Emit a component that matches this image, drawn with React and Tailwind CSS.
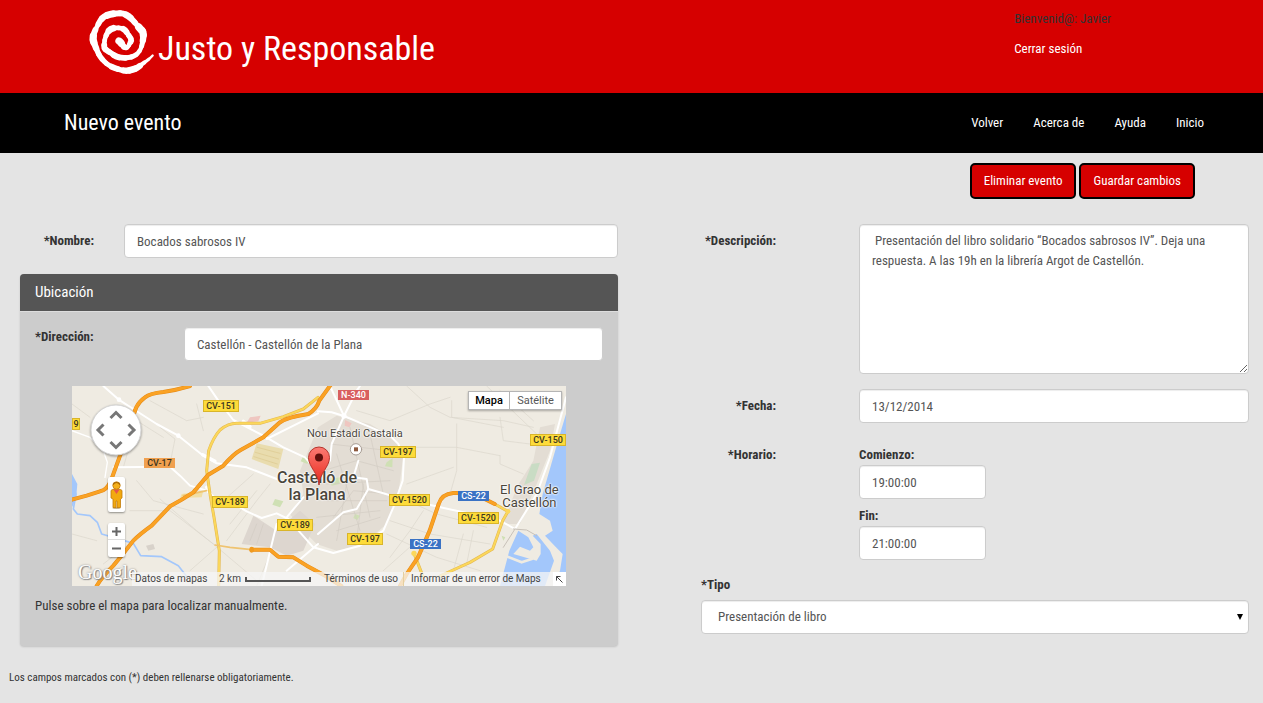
import React from "react";

const field =
  "block h-[34px] w-full rounded-[4px] border border-[#ccc] bg-white px-3 text-[13px] text-[#555] shadow-[inset_0_1px_1px_rgba(0,0,0,0.075)] outline-none";
const label = "text-[13px] leading-5 font-bold text-[#333]";
const actionButton =
  "h-9 rounded-[5px] border-2 border-black bg-[#d60000] px-3 text-[13px] text-white";

const yellow = "border border-[#d9b52a] bg-[#fddb3a] text-[#3a3520]";
const blue = "bg-[#3a72c4] text-white";

const roadLabels = [
  { text: "9", box: `left-0 top-8 h-3 w-2 ${yellow}` },
  { text: "CV-151", box: `left-[131px] top-3.5 h-3 w-9 ${yellow}` },
  { text: "CV-17", box: "left-[72px] top-[72px] h-2.5 w-[31px] bg-[#f0a04f] text-[#3a3520]" },
  { text: "CV-189", box: `left-[140px] top-[110px] h-3 w-9 ${yellow}` },
  { text: "CV-189", box: `left-[205px] top-[133px] h-3 w-9 ${yellow}` },
  { text: "N-340", box: "left-[266px] top-1 h-2.5 w-[31px] bg-[#d95f5f] text-white" },
  { text: "CV-197", box: `left-[308px] top-[60px] h-3 w-9 ${yellow}` },
  { text: "CV-1520", box: `left-[317px] top-[108px] h-3 w-[41px] ${yellow}` },
  { text: "CV-197", box: `left-[275px] top-[147px] h-3 w-9 ${yellow}` },
  { text: "CS-22", box: `left-[386px] top-[105px] h-2.5 w-[31px] ${blue}` },
  { text: "CV-1520", box: `left-[386px] top-[126px] h-3 w-[41px] ${yellow}` },
  { text: "CS-22", box: `left-[338px] top-[153px] h-2.5 w-[31px] ${blue}` },
  { text: "CV-150", box: `left-[458px] top-12 h-3 w-9 ${yellow}` },
];

// Brush stroke of the spiral: [x, y, thickness] from the tail to the centre.
const spiral = [
  [204, 144, 4], [196, 153, 7], [182, 165, 9], [168, 174, 13], [156, 185, 18], [140, 191, 20], [122, 195, 19],
  [104, 192, 16], [86, 186, 18], [68, 178, 15], [54, 166, 15], [42, 152, 16], [34, 136, 16], [27, 118, 19],
  [20, 100, 22], [24, 80, 18], [32, 64, 14], [42, 44, 17], [54, 31, 19], [72, 25, 21], [92, 22, 18],
  [112, 22, 18], [128, 30, 20], [140, 42, 18], [152, 56, 16], [164, 70, 22], [172, 78, 22], [172, 96, 19],
  [169, 112, 15], [165, 128, 13], [156, 142, 13], [144, 151, 15], [128, 155, 16], [108, 156, 17], [90, 152, 18],
  [76, 142, 16], [62, 133, 17], [54, 126, 18], [55, 110, 14], [57, 96, 14], [64, 80, 16], [74, 68, 20],
  [90, 65, 14], [106, 66, 14], [118, 72, 18], [125, 84, 15], [132, 93, 16], [137, 103, 17], [131, 112, 14],
  [127, 122, 13], [117, 127, 15], [110, 117, 18], [101, 106, 22], [97, 104, 22],
];

function midpoint(a, b) {
  return [(a[0] + b[0]) / 2, (a[1] + b[1]) / 2];
}

function Logo() {
  return (
    <svg className="h-[72px] w-[72px]" viewBox="0 0 216 216" fill="none" stroke="#fff" strokeLinecap="round" aria-hidden="true">
      {spiral.slice(1, -1).map((point, i) => {
        const from = midpoint(spiral[i], point);
        const to = midpoint(point, spiral[i + 2]);
        return (
          <path key={i} d={`M${from} Q${point[0]},${point[1]} ${to}`} strokeWidth={point[2]} />
        );
      })}
    </svg>
  );
}

function MapDrawing() {
  return (
    <svg className="block h-full w-full" viewBox="6 6 1482 600" preserveAspectRatio="xMinYMin slice" fill="none" strokeLinecap="round" strokeLinejoin="round" aria-hidden="true">
      <rect x="0" y="0" width="1500" height="612" fill="#efebe2" />
      {/* built-up areas */}
      <path fill="#e3ddd4" d="M744 130 L800 95 L900 120 L975 165 L1000 215 L985 330 L950 420 L880 480 L800 500 L740 480 L690 430 L660 390 L700 330 L690 260 Z" />
      <path fill="#ddd6cf" d="M550 395 L620 440 L690 380 L735 420 L700 500 L650 515 L600 490 L515 480 Z" />
      <path fill="#e3ddd4" d="M1410 130 L1455 120 L1440 200 L1400 300 L1350 420 L1300 420 L1340 310 L1390 230 Z" />
      <path fill="#e9dcae" d="M560 178 L640 195 L625 255 L545 225 Z" />
      <path stroke="#dcc98f" strokeWidth="2" d="M562 190 L630 208 M556 205 L626 225 M552 218 L622 240" />
      <path fill="#f1dfa5" d="M335 330 L400 320 L395 340 L330 342 Z" />
      <path fill="#d8d2ca" d="M228 485 L250 480 L255 495 L235 500 Z" />
      <path fill="#cfe0b4" d="M615 345 L640 352 L630 370 L607 362 Z M950 235 L968 222 L967 250 L945 247 Z M855 390 L870 395 L862 408 L850 402 Z M775 285 L812 280 L808 300 L785 305 Z M1295 455 L1306 460 L1300 470 Z M700 215 L720 225 L712 240 L692 232 Z" />
      <path fill="#c9dcc4" d="M1385 240 L1410 236 L1392 290 L1362 303 Z" />
      <path fill="#efc6c0" d="M540 100 L572 95 L565 112 L530 116 Z M825 108 L845 118 L838 130 L824 125 Z" />
      {/* sea and harbour */}
      <path fill="#a3c7fb" d="M1488 90 L1470 150 L1444 240 L1418 330 L1408 390 L1440 410 L1448 440 L1425 455 L1458 490 L1478 510 L1470 560 L1450 606 L1488 606 Z" />
      <path fill="#a3c7fb" d="M1345 440 L1375 460 L1390 490 L1380 500 L1350 488 L1330 510 L1400 530 L1412 510 L1412 480 L1388 455 L1400 450 L1440 500 L1452 530 L1425 606 L1290 606 L1318 500 Z" />
      <path stroke="#efebe2" strokeWidth="8" d="M1305 515 L1355 535 L1385 525 M1350 500 L1370 510" />
      {/* rivers */}
      <path stroke="#a3c7fb" strokeWidth="5" d="M6 300 L18 330 L10 375 L22 390 L60 395 L82 415 L95 450 L150 466 L190 478 L212 515 L275 518 L325 545 L352 580" />
      <path fill="#a3c7fb" d="M6 270 L22 300 L18 345 L6 370 Z" />
      {/* minor paths */}
      <path stroke="#dbd6cc" strokeWidth="2" d="M6 60 L60 100 M160 250 L200 110 L280 160 M300 240 L315 165 L270 130 M270 345 L380 440 L430 480 L560 590 M200 290 L250 350 L400 390 M180 380 L300 380 L430 480 M6 450 L80 470 M100 540 L240 430 M360 560 L440 490 M470 470 L560 350 L600 300 M560 606 L600 510 M460 350 L550 270 M480 420 L560 320 M380 60 L400 140 M240 50 L350 110 L400 100 M860 80 L960 110 L1080 60 L1140 40 M1010 6 L1080 70 L1140 100 L1300 110 L1390 130 M1145 50 L1145 100 L1300 130 M1290 100 L1300 170 L1380 180 M1000 190 L1160 190 L1290 215 M1160 120 L1160 260 L1140 330 M1290 215 L1290 240 L1360 270 M1010 300 L1150 250 M990 340 L1100 390 L1250 430 M960 410 L1080 450 L1260 480 M950 450 L1100 520 L1230 560 M1180 450 L1150 560 M1210 440 L1190 540 M960 520 L1020 440 L1060 380 M940 560 L1030 480 M1290 20 L1390 110 M1250 6 L1400 150" />
      <path stroke="#d2ccc2" strokeWidth="2" d="M760 260 L860 230 L970 260 M770 300 L960 290 M760 350 L950 350 M740 400 L930 380 M800 440 L930 400 M800 210 L870 440 M840 130 L900 400 M900 150 L940 330 M780 180 L960 200 M790 400 L850 320 L960 330 M830 300 L800 470 M880 300 L860 470 M560 420 L540 470 M580 420 L560 480" />
      {/* local roads */}
      <g stroke="#fff" strokeWidth="6">
        <path d="M100 6 L145 46 L190 75 L260 120 L325 155 L400 215 L440 238 L530 250 L620 285" />
        <path d="M415 6 L445 50 L490 108 L580 155 L640 190 L705 220 L740 260" />
        <path d="M590 165 L660 130 L744 88 M744 82 L785 85 L822 96 L890 125 L960 155 L985 180 L1002 220 L998 290 L970 370 L940 440 L870 485 L790 507 L730 490 L690 445 L655 405 L620 388 L575 402 L530 382 L490 358 L440 345 L410 320 L360 305 L330 275 L300 248 L130 250" />
        <path d="M822 96 L860 20 L870 6 M822 96 L780 6 M822 96 L785 180 L780 230 M865 230 L850 280 L890 285 L895 315 L1000 345 L1180 385 L1290 410 L1335 435" />
        <path d="M895 315 L860 375 L820 385 L744 450 M744 480 L650 560 M620 420 L575 606 M700 340 L650 400 M1488 40 L1440 220 L1400 330 L1335 435" />
        <path d="M6 140 L60 160 L100 200 L112 235 L105 280" strokeWidth="4" />
      </g>
      <circle cx="147" cy="47" r="7" fill="#fff" />
      <circle cx="325" cy="155" r="7" fill="#fff" />
      <circle cx="822" cy="96" r="8" fill="#fff" />
      <path stroke="#fff" strokeWidth="10" d="M398 212 L435 232 M410 310 L425 340 M520 112 L540 128" />
      <path stroke="#c8c1b8" strokeWidth="3" d="M1330 435 L1370 438 L1400 455 M1335 435 L1300 490" />
      {/* secondary roads */}
      <g>
        <path stroke="#e3b751" strokeWidth="9" d="M446 606 L448 500 L432 400 L420 330 L410 260 L416 200 Q430 160 450 138 Q475 118 500 118 L570 118 L640 98 L700 75 L744 40" />
        <path stroke="#fbd75b" strokeWidth="6" d="M446 606 L448 500 L432 400 L420 330 L410 260 L416 200 Q430 160 450 138 Q475 118 500 118 L570 118 L640 98 L700 75 L744 40" />
        <path stroke="#efc370" strokeWidth="5" d="M435 483 L480 490 L545 497 M340 335 L410 320" />
        <path stroke="#e3b751" strokeWidth="9" d="M1060 580 L1032 508 M1110 576 L1200 535 L1268 495 L1298 410 L1314 382 L1274 360" />
        <path stroke="#fbd75b" strokeWidth="6" d="M1060 580 L1032 508 M1110 576 L1200 535 L1268 495 L1298 410 L1314 382 L1274 360" />
        <circle cx="1032" cy="508" r="8" fill="#fbd75b" />
        <circle cx="1314" cy="382" r="7" fill="#fbd75b" />
      </g>
      {/* motorways */}
      <g stroke="#e58a17" strokeWidth="12">
        <path d="M80 606 Q95 580 130 545 Q160 510 190 470 Q210 450 245 425 L300 367 Q340 345 370 325 L415 272 L460 245 Q490 210 512 198 L580 160 L630 115 Q650 100 715 90 Q740 75 748 50 L784 0" />
        <path d="M360 6 Q320 18 280 24 Q240 28 225 40 Q190 65 190 110 L150 215 L122 292 Q110 318 90 322 L50 335 L6 347" />
        <path d="M545 497 L600 497 L625 518 L670 520 L710 545 L760 572 L814 606" />
        <path d="M990 606 L1010 570 L1044 520 L1079 440 L1106 360 Q1115 330 1150 327 Q1200 325 1244 345 L1274 360" />
      </g>
      <g stroke="#faa224" strokeWidth="9">
        <path d="M80 606 Q95 580 130 545 Q160 510 190 470 Q210 450 245 425 L300 367 Q340 345 370 325 L415 272 L460 245 Q490 210 512 198 L580 160 L630 115 Q650 100 715 90 Q740 75 748 50 L784 0" />
        <path d="M360 6 Q320 18 280 24 Q240 28 225 40 Q190 65 190 110 L150 215 L122 292 Q110 318 90 322 L50 335 L6 347" />
        <path d="M545 497 L600 497 L625 518 L670 520 L710 545 L760 572 L814 606" />
        <path d="M990 606 L1010 570 L1044 520 L1079 440 L1106 360 Q1115 330 1150 327 Q1200 325 1244 345 L1274 360" />
      </g>
      <path stroke="#f09a1f" strokeWidth="14" d="M545 495 L545 499" />
      {/* stadium marker */}
      <circle cx="858" cy="196" r="17" fill="#fff" stroke="#a79d94" strokeWidth="3" />
      <rect x="852" y="190" width="12" height="12" fill="#8d5a3f" />
    </svg>
  );
}

function MapView() {
  const halo =
    "absolute whitespace-nowrap text-[#4a463c] [text-shadow:0_0_2px_#fff,0_0_2px_#fff,0_0_2px_#fff]";
  return (
    <div className="relative h-[200px] overflow-hidden bg-[#efebe2] font-['Roboto','Liberation_Sans',sans-serif]" role="region" aria-label="Mapa">
      <MapDrawing />
      {roadLabels.map((r, i) => (
        <span
          key={i}
          className={`absolute flex items-center justify-center text-[9px] leading-none font-medium whitespace-nowrap ${r.box}`}
        >
          {r.text}
        </span>
      ))}
      <span className={`${halo} top-[42px] left-[235px] text-[11px] leading-3`}>Nou Estadi Castalia</span>
      <span className={`${halo} top-[83px] left-[205px] text-center text-base leading-[17px] font-medium`}>
        Castelló de
        <br />
        la Plana
      </span>
      <span className={`${halo} top-[97px] left-[428px] text-center text-[13px] leading-[13px]`}>
        El Grao de
        <br />
        Castellón
      </span>

      <svg className="absolute top-[60px] left-[235px] h-10 w-6" viewBox="0 0 24 40" aria-hidden="true">
        <defs>
          <linearGradient id="pin" x1="0" y1="0" x2="0" y2="1">
            <stop offset="0" stopColor="#fb7b73" />
            <stop offset="1" stopColor="#e8281c" />
          </linearGradient>
        </defs>
        <path d="M12 39 C11.4 27 1.5 21 1.5 11.5 A10.5 10.5 0 0 1 22.5 11.5 C22.5 21 12.6 27 12 39 Z" fill="url(#pin)" stroke="#b5342c" />
        <circle cx="12" cy="11.5" r="4" fill="#5f0f0b" />
      </svg>

      <svg className="absolute top-[18px] left-[18px] h-[52px] w-[52px] drop-shadow-[0_1px_1px_rgba(0,0,0,0.4)]" viewBox="0 0 52 52" fill="none" aria-hidden="true">
        <circle cx="26" cy="26" r="25" fill="#fff" stroke="#d5d5d5" />
        <path stroke="#777" strokeWidth="3" d="M20.500 14 L26 8.500 L31.500 14 M20.500 38 L26 43.500 L31.500 38 M13.500 20.500 L8 26 L13.500 31.500 M38.500 20.500 L44 26 L38.500 31.500" />
      </svg>

      <div className="absolute top-[91px] left-9 flex h-[35px] w-[17px] items-center justify-center rounded-[2px] bg-white shadow-[0_1px_2px_rgba(0,0,0,0.4)]">
        <svg className="h-7 w-[13px]" viewBox="0 0 13 28" aria-hidden="true">
          <ellipse cx="6.500" cy="27" rx="4" ry="1" fill="#c9b68c" />
          <path d="M1 10 Q1 8.500 3 8.500 H10 Q12 8.500 12 10 V17 L10.500 18 V26.500 H7 V20 H6 V26.500 H3 V18 L1 17 Z" fill="#f2a90f" stroke="#c27c0a" strokeWidth=".8" />
          <path d="M3.500 8.500 H9.500 L6.500 13 Z" fill="#e5544b" />
          <circle cx="6.500" cy="4.500" r="3.700" fill="#f5b01b" stroke="#c27c0a" strokeWidth=".8" />
          <path d="M3 3.500 Q6.500 -.5 10 3.500" fill="none" stroke="#a86708" strokeWidth="1.200" />
        </svg>
      </div>

      <div className="absolute top-[137px] left-9 flex w-[17px] flex-col divide-y divide-[#ddd] rounded-[2px] bg-white shadow-[0_1px_2px_rgba(0,0,0,0.4)]">
        {["Acercar", "Alejar"].map((name) => (
          <button key={name} type="button" aria-label={name} className="flex h-[17px] items-center justify-center">
            <svg className="h-[9px] w-[9px]" viewBox="0 0 9 9" stroke="#666" strokeWidth="2" aria-hidden="true">
              <path d={name === "Acercar" ? "M0 4.500H9M4.500 0V9" : "M0 4.500H9"} />
            </svg>
          </button>
        ))}
      </div>

      <div className="absolute top-[5px] right-1 flex h-[19px] divide-x divide-[#b5b5b5] border border-[#b5b5b5] bg-white text-[11px] leading-4 shadow-[0_1px_2px_rgba(0,0,0,0.3)]">
        <button type="button" className="w-[41px] font-medium text-black">Mapa</button>
        <button type="button" className="w-[51px] text-[#565656]">Satélite</button>
      </div>

      <span className="absolute bottom-0.5 left-1.5 font-['Liberation_Serif',serif] text-xl leading-6 text-white [text-shadow:0_0_2px_#777,1px_1px_1px_#888]">
        Google
      </span>

      <div className="absolute right-0 bottom-0 left-[60px] flex h-[14px] items-center bg-[#f5f5f5]/75 pl-[3px] text-[10px] leading-[14px] whitespace-nowrap text-[#444]">
        <span className="w-[84px]">Datos de mapas</span>
        <span className="w-[26px]">2 km</span>
        <span className="h-[5px] w-[66px] border-2 border-t-0 border-[#555]" />
        <span className="ml-[13px] w-20 border-r border-[#e5cfa0]">
          <a href="#terminos">Términos de uso</a>
        </span>
        <a href="#informar" className="ml-[7px]">Informar de un error de Maps</a>
        <span className="ml-auto flex h-[14px] w-[13px] items-center justify-center bg-white">
          <svg className="h-[7px] w-[7px]" viewBox="0 0 7 7" fill="none" stroke="#444" aria-hidden="true">
            <path d="M.5 4.500V.5H4.500M.5 .5L6.500 6.500" />
          </svg>
        </span>
      </div>
    </div>
  );
}

export default function App() {
  return (
    <div className="min-h-screen bg-[#e4e4e4] font-['Roboto_Condensed','Liberation_Sans',sans-serif] text-[13px] leading-5 text-[#333]">
      <header className="flex h-[93px] justify-between bg-[#d60000] pr-[152px] pl-[86px]">
        <div className="flex items-start pt-1.5">
          <Logo />
          <h1 className="pt-[22px] text-[34px] leading-10 text-white">Justo y Responsable</h1>
        </div>
        <div className="flex flex-col gap-2.5 pt-[9px]">
          <span>Bienvenid@: Javier</span>
          <a href="#salir" className="text-white">Cerrar sesión</a>
        </div>
      </header>

      <div className="flex h-[60px] items-center justify-between bg-black pr-[59px] pl-16 text-white">
        <h2 className="text-[22px] leading-8">Nuevo evento</h2>
        <nav className="flex gap-[30px]">
          <a href="#volver">Volver</a>
          <a href="#acerca">Acerca de</a>
          <a href="#ayuda">Ayuda</a>
          <a href="#inicio">Inicio</a>
        </nav>
      </div>

      <form onSubmit={(e) => e.preventDefault()}>
        <div className="flex justify-end gap-[3px] pt-2.5 pr-[68px]">
          <button type="button" className={actionButton}>Eliminar evento</button>
          <button type="submit" className={actionButton}>Guardar cambios</button>
        </div>

        <div className="grid grid-cols-[598fr_548fr] gap-x-[83px] pt-[25px] pr-3.5 pl-5">
          <div className="min-w-0">
            <div className="flex items-center">
              <label htmlFor="nombre" className={`${label} w-[74px] text-right`}>*Nombre:</label>
              <div className="ml-[30px] flex-1">
                <input id="nombre" className={field} defaultValue="Bocados sabrosos IV" />
              </div>
            </div>

            <section className="mt-4 overflow-hidden rounded-[4px] bg-[#ccc] shadow-[0_1px_2px_rgba(0,0,0,0.15)]">
              <h3 className="border-b border-[#ddd] bg-[#555] px-[15px] py-2 text-[15px] leading-[21px] text-white">
                Ubicación
              </h3>
              <div className="px-[15px] pt-[15px] pb-[30px]">
                <div className="flex items-start">
                  <label htmlFor="direccion" className={`${label} w-[149px]`}>*Dirección:</label>
                  <div className="flex-1">
                    <input id="direccion" className={field} defaultValue="Castellón - Castellón de la Plana" />
                  </div>
                </div>
                <div className="mx-[37px] mt-[25px]">
                  <MapView />
                </div>
                <p className="mt-2.5">Pulse sobre el mapa para localizar manualmente.</p>
              </div>
            </section>
          </div>

          <div className="flex min-w-0 flex-col">
            <div className="flex">
              <label htmlFor="descripcion" className={`${label} w-[75px] pt-[7px] text-right whitespace-nowrap`}>*Descripción:</label>
              <div className="ml-[83px] flex-1">
                <textarea
                  id="descripcion"
                  className="block h-[150px] w-full rounded-[4px] border border-[#ccc] bg-white px-3 py-1.5 text-[13px] leading-5 text-[#555] shadow-[inset_0_1px_1px_rgba(0,0,0,0.075)] outline-none"
                  defaultValue=" Presentación del libro solidario “Bocados sabrosos IV”. Deja una respuesta. A las 19h en la librería Argot de Castellón."
                />
              </div>
            </div>
            <div className="mt-[15px] flex items-center">
              <label htmlFor="fecha" className={`${label} w-[75px] text-right`}>*Fecha:</label>
              <div className="ml-[83px] flex-1">
                <input id="fecha" className={field} defaultValue="13/12/2014" />
              </div>
            </div>
            <div className="mt-[22px] flex" role="group" aria-labelledby="horario">
              <span id="horario" className={`${label} w-[75px] text-right`}>*Horario:</span>
              <div className="ml-[83px] flex w-[127px] flex-col gap-[7px]">
                <div>
                  <label htmlFor="comienzo" className={`${label} block`}>Comienzo:</label>
                  <input id="comienzo" className={field} defaultValue="19:00:00" />
                </div>
                <div>
                  <label htmlFor="fin" className={`${label} block`}>Fin:</label>
                  <input id="fin" className={field} defaultValue="21:00:00" />
                </div>
              </div>
            </div>
            <div className="mt-[15px]">
              <label htmlFor="tipo" className={`${label} block`}>*Tipo</label>
              <div className="relative mt-[5px]">
                <select id="tipo" className={`${field} appearance-none pl-4`}>
                  <option>Presentación de libro</option>
                </select>
                <svg className="pointer-events-none absolute top-1/2 right-1.5 h-1.5 w-1.5 -translate-y-1/2" viewBox="0 0 6 6" aria-hidden="true">
                  <path d="M0 0H6L3 6Z" fill="#000" />
                </svg>
              </div>
            </div>
          </div>
        </div>

        <p className="pt-[22px] pb-3 pl-[9px] text-[11px] leading-5">
          Los campos marcados con (*) deben rellenarse obligatoriamente.
        </p>
      </form>
    </div>
  );
}
